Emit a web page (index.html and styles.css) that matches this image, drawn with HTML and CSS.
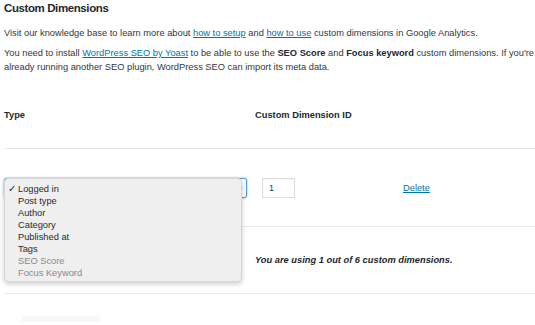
FILE: index.html
```html
<!DOCTYPE html>
<html>
<head>
<meta charset="utf-8">
<link rel="stylesheet" href="styles.css">
</head>
<body>
<div class="wrap">
  <h2 class="title">Custom Dimensions</h2>
  <p class="intro">Visit our knowledge base to learn more about <a href="#">how to setup</a> and <a href="#">how to use</a> custom dimensions in Google Analytics.</p>
  <p class="intro two">You need to install <a href="#">WordPress SEO by Yoast</a> to be able to use the <b>SEO Score</b> and <b>Focus keyword</b> custom dimensions. If you're<br>already running another SEO plugin, WordPress SEO can import its meta data.</p>

  <div class="table">
    <div class="row head">
      <div class="c1">Type</div>
      <div class="c2">Custom Dimension ID</div>
      <div class="c3"></div>
    </div>
    <div class="row item">
      <div class="c1">
        <div class="select">
          <span class="arrows"><svg width="5" height="9" viewBox="0 0 5 9"><path d="M0.5 3.5 L2.5 1 L4.5 3.5 Z M0.5 5.5 L2.5 8 L4.5 5.5 Z" fill="#333"/></svg></span>
        </div>
        <div class="menu">
          <div class="opt sel"><span class="check">✓</span>Logged in</div>
          <div class="opt">Post type</div>
          <div class="opt">Author</div>
          <div class="opt">Category</div>
          <div class="opt">Published at</div>
          <div class="opt">Tags</div>
          <div class="opt dis">SEO Score</div>
          <div class="opt dis">Focus Keyword</div>
        </div>
      </div>
      <div class="c2"><div class="num">1</div></div>
      <div class="c3"><a href="#">Delete</a></div>
    </div>
    <div class="row foot">
      <div class="c1"></div>
      <div class="usage">You are using 1 out of 6 custom dimensions.</div>
    </div>
  </div>
  <div class="ghost"></div>
</div>
</body>
</html>
```

FILE: styles.css
```css
html, body {
  margin: 0;
  padding: 0;
  background: #fff;
}
body {
  font-family: "Liberation Sans", Arial, sans-serif;
  color: #32373c;
  font-size: 9.3px;
  overflow: hidden;
  height: 325px;
}
.wrap {
  padding: 0 0 0 4px;
  width: 531px;
}
.title {
  margin: 0;
  font-size: 11.5px;
  line-height: 17px;
  font-weight: 700;
  letter-spacing: -0.4px;
  color: #23282d;
}
.intro {
  margin: 9px 0 0;
  line-height: 14px;
}
.intro.two {
  margin-top: 6px;
  white-space: nowrap;
}
a {
  color: #0073aa;
  text-decoration: underline;
}
b {
  color: #23282d;
}
.table {
  margin-top: 28px;
}
.row {
  display: grid;
  grid-template-columns: 251px 148px 1fr;
  align-items: center;
  border-bottom: 1px solid #e8e8e8;
  line-height: 12px;
}
.head {
  height: 47px;
  font-weight: 700;
  color: #23282d;
  align-items: start;
  padding-top: 7px;
  box-sizing: border-box;
}
.item {
  height: 78px;
  box-sizing: border-box;
}
.foot {
  height: 67px;
  box-sizing: border-box;
  grid-template-columns: 251px 1fr;
}
.item .c1 {
  position: relative;
  height: 20px;
}
.select {
  width: 243px;
  height: 20px;
  border: 1px solid #5b9dd9;
  border-radius: 3px;
  box-shadow: 0 0 2px rgba(30,140,190,0.8);
  box-sizing: border-box;
  background: #fff;
  position: relative;
}
.arrows {
  position: absolute;
  right: 3px;
  top: 5px;
  line-height: 0;
}
.menu {
  position: absolute;
  left: 0;
  top: 0;
  width: 236px;
  background: #efefef;
  border: 1px solid #d6d6d6;
  border-radius: 4px;
  box-shadow: 0 2px 5px rgba(0,0,0,0.2);
  padding: 4px 0 2px;
  font-size: 9.3px;
  color: #2b2b2b;
  z-index: 2;
}
.opt {
  height: 12px;
  line-height: 12px;
  padding-left: 13px;
  position: relative;
}
.opt.dis {
  color: #8a8a8a;
}
.check {
  position: absolute;
  left: 3px;
  font-size: 10px;
}
.num {
  width: 33px;
  height: 20px;
  border: 1px solid #ddd;
  box-sizing: border-box;
  line-height: 18px;
  padding-left: 6px;
  font-size: 9px;
  box-shadow: inset 0 1px 2px rgba(0,0,0,0.05);
  margin-left: 7px;
}
.usage {
  font-weight: 700;
  font-style: italic;
  color: #23282d;
}
.ghost {
  margin: 22px 0 0 18px;
  width: 78px;
  height: 6px;
  background: #f8f8f8;
}
```
